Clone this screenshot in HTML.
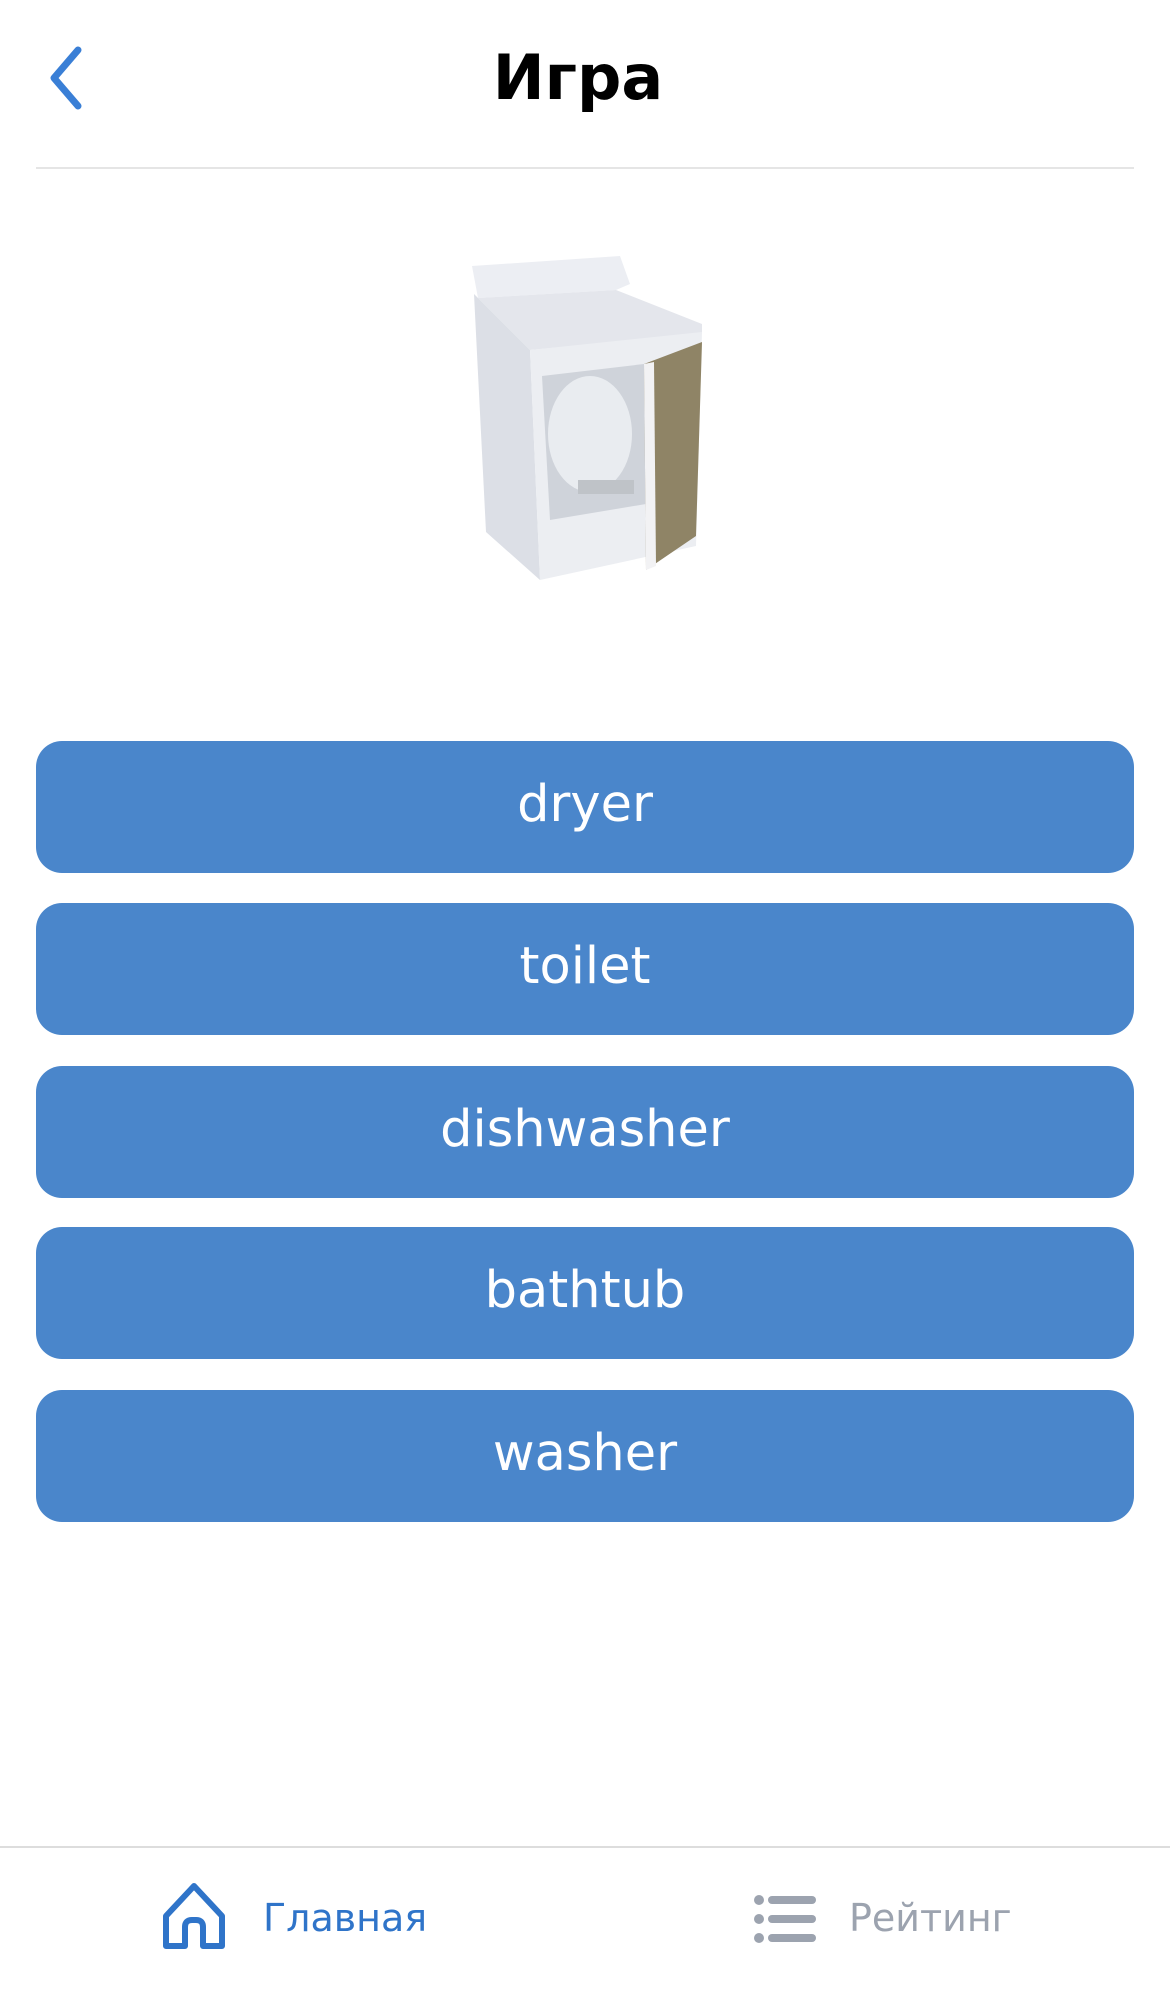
<!DOCTYPE html>
<html><head><meta charset="utf-8"><style>
*{margin:0;padding:0;box-sizing:border-box}
body{width:1170px;height:1992px;background:#fff;position:relative;overflow:hidden;font-family:"DejaVu Sans","Liberation Sans","Noto Sans CJK SC",sans-serif}
.abs{position:absolute}
.title{left:0;width:1156px;top:38px;text-align:center;font-weight:bold;font-size:62px;color:#000;line-height:80px}
.div{left:36px;width:1098px;top:167px;height:2px;background:#e5e5e5}
.btn{position:absolute;left:36px;width:1098px;height:132px;border-radius:26px;background:#4a86cb;color:#fff;font-size:51px;text-align:center;line-height:128px}
.bdiv{left:0;width:1170px;top:1846px;height:2px;background:#ddd}
.tab{font-size:38px;line-height:50px;top:1893px}
</style></head><body>
<svg class="abs" style="left:44px;top:44px" width="44" height="68" viewBox="0 0 44 68"><path d="M34 6 L10 34 L34 62" fill="none" stroke="#3a7fd6" stroke-width="7" stroke-linecap="round" stroke-linejoin="round"/></svg>
<div class="abs title">Игра</div>
<div class="abs div"></div>
<svg class="abs" style="left:470px;top:254px" width="232" height="326" viewBox="0 0 232 326">
<polygon points="2,12 150,2 160,30 146,36 8,44" fill="#eceef3"/>
<polygon points="8,44 146,36 232,70 232,80 60,96" fill="#e4e6ec"/>
<polygon points="4,40 60,96 70,326 16,278" fill="#dcdfe6"/>
<polygon points="60,96 232,78 226,292 70,326" fill="#eceef2"/>
<polygon points="72,122 174,110 176,250 80,266" fill="#cfd3da"/>
<ellipse cx="120" cy="180" rx="42" ry="58" fill="#e9ecf0"/>
<polygon points="174,110 232,88 226,282 176,316" fill="#8f8466"/>
<polygon points="174,110 184,108 186,312 176,316" fill="#f2f2f4"/>
<rect x="108" y="226" width="56" height="14" fill="#bfc3c8"/>
</svg>
<div class="btn" style="top:741px">dryer</div>
<div class="btn" style="top:903px">toilet</div>
<div class="btn" style="top:1066px">dishwasher</div>
<div class="btn" style="top:1227px">bathtub</div>
<div class="btn" style="top:1390px">washer</div>
<div class="abs bdiv"></div>
<svg class="abs" style="left:160px;top:1882px" width="72" height="70" viewBox="0 0 72 70"><path d="M6 64 V34 L34 4 L62 34 V64 H43 V45 Q43 38 36 38 H32 Q25 38 25 45 V64 Z" fill="none" stroke="#2f74c9" stroke-width="6" stroke-linejoin="round"/></svg>
<div class="abs tab" style="left:263px;color:#2f74c9">Главная</div>
<svg class="abs" style="left:754px;top:1895px" width="64" height="48" viewBox="0 0 64 48"><g fill="#9ca3af"><circle cx="5" cy="5" r="5"/><circle cx="5" cy="24" r="5"/><circle cx="5" cy="43" r="5"/><rect x="14" y="1" width="48" height="8" rx="4"/><rect x="14" y="20" width="48" height="8" rx="4"/><rect x="14" y="39" width="48" height="8" rx="4"/></g></svg>
<div class="abs tab" style="left:849px;color:#9ca3af">Рейтинг</div>
</body></html>
